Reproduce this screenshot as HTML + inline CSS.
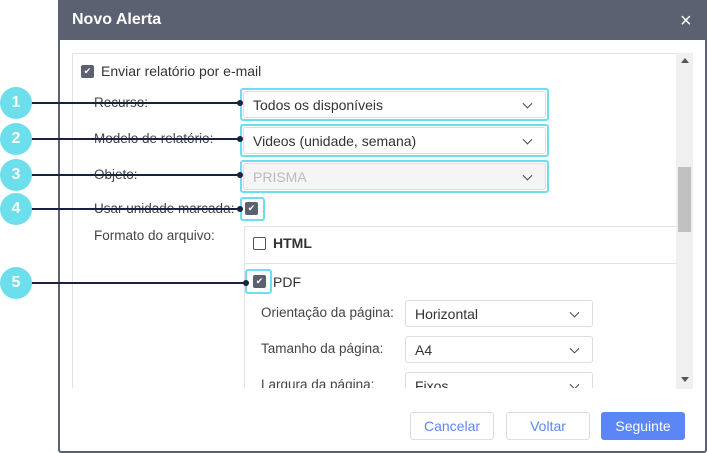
<!DOCTYPE html><html><head><style>
*{box-sizing:border-box;margin:0;padding:0}
body{width:707px;height:453px;background:#fff;font-family:"Liberation Sans",Arial,sans-serif;position:relative;overflow:hidden;color:#333;font-size:14px}
.a{position:absolute}
.dlg{left:58px;top:0;width:649px;height:453px;border:2px solid #5b6170;border-radius:3px;background:#fff}
.hd{left:58px;top:0;width:649px;height:40px;background:#5b6170;color:#fff;font-size:16px;font-weight:bold;padding:11px 0 0 14px}
.lbl{color:#444;font-size:13.5px}
.sel{border:1px solid #ddd;border-radius:3px;background:#fff;font-size:14px;padding-left:9px;display:flex;align-items:center}
.hl{border:2px solid #6ddfec;border-radius:3px}
.chev{position:absolute;right:14px;top:50%;width:7px;height:7px;border-right:1.6px solid #444;border-bottom:1.6px solid #444;transform:translateY(-70%) rotate(45deg)}
.cb{width:13px;height:13px;border-radius:2px;background:#5b6170;color:#fff;font-size:9px;line-height:13px;text-align:center}
.circ{width:32px;height:32px;border-radius:50%;background:#6ddfec;color:#fff;font-weight:bold;font-size:16px;text-align:center;line-height:32px}
.ln{height:2px;background:#172340}
.dot{width:6px;height:6px;border-radius:50%;background:#172340}
.btn{height:28px;border:1px solid #ddd;border-radius:3px;color:#5b86f5;font-size:14px;text-align:center;line-height:26px;background:#fff}
</style></head><body>
<div class="a dlg"></div>
<div class="a hd">Novo Alerta</div>
<div class="a" style="left:680px;top:10px;color:#fff;font-size:20px">×</div>
<div class="a" style="left:72px;top:53px;width:605px;height:336px;border:1px solid #e3e3e3;border-bottom:none"></div>
<div class="a" style="left:676px;top:53px;width:17px;height:336px;background:#f0f0f0"></div>
<div class="a" style="left:678px;top:167px;width:13px;height:65px;background:#c1c1c1"></div>
<div class="a" style="left:681px;top:58px;border:4px solid transparent;border-bottom:5px solid #555;border-top:none"></div>
<div class="a" style="left:681px;top:377px;border:4px solid transparent;border-top:5px solid #555;border-bottom:none"></div>
<div class="a cb" style="left:81px;top:65px">✔</div>
<div class="a" style="left:101px;top:63px;font-size:14px;color:#333">Enviar relatório por e-mail</div>
<div class="a lbl" style="left:94px;top:95px">Recurso:</div>
<div class="a lbl" style="left:94px;top:131px">Modelo de relatório:</div>
<div class="a lbl" style="left:94px;top:167px">Objeto:</div>
<div class="a lbl" style="left:94px;top:201px">Usar unidade marcada:</div>
<div class="a lbl" style="left:94px;top:228px">Formato do arquivo:</div>
<div class="a hl" style="left:240px;top:88px;width:309px;height:33px"></div>
<div class="a sel" style="left:243px;top:91px;width:303px;height:27px">Todos os disponíveis<span class="chev"></span></div>
<div class="a hl" style="left:240px;top:124px;width:309px;height:33px"></div>
<div class="a sel" style="left:243px;top:127px;width:303px;height:27px">Videos (unidade, semana)<span class="chev"></span></div>
<div class="a hl" style="left:240px;top:160px;width:309px;height:33px"></div>
<div class="a sel" style="left:243px;top:163px;width:303px;height:27px;background:#f5f5f5;color:#bbb">PRISMA<span class="chev"></span></div>
<div class="a hl" style="left:240px;top:197px;width:25px;height:24px"></div>
<div class="a cb" style="left:245px;top:202px">✔</div>
<div class="a" style="left:244px;top:226px;width:433px;height:163px;border-left:1px solid #e3e3e3;border-top:1px solid #e3e3e3"></div>
<div class="a" style="left:244px;top:263px;width:433px;height:1px;background:#e3e3e3"></div>
<div class="a" style="left:253px;top:237px;width:13px;height:13px;border:1.5px solid #555;border-radius:2px"></div>
<div class="a" style="left:273px;top:235px;font-weight:bold;color:#333">HTML</div>
<div class="a hl" style="left:245px;top:269px;width:27px;height:25px"></div>
<div class="a cb" style="left:253px;top:275px">✔</div>
<div class="a" style="left:273px;top:274px;color:#333">PDF</div>
<div class="a lbl" style="left:261px;top:305px">Orientação da página:</div>
<div class="a lbl" style="left:261px;top:341px">Tamanho da página:</div>
<div class="a lbl" style="left:261px;top:377px">Largura da página:</div>
<div class="a sel" style="left:405px;top:300px;width:188px;height:27px">Horizontal<span class="chev"></span></div>
<div class="a sel" style="left:405px;top:336px;width:188px;height:27px">A4<span class="chev"></span></div>
<div class="a sel" style="left:405px;top:372px;width:188px;height:27px">Fixos<span class="chev"></span></div>
<div class="a" style="left:60px;top:388px;width:616px;height:20px;background:#fff"></div>
<div class="a" style="left:676px;top:388px;width:17px;height:1px;background:#f0f0f0"></div>
<div class="a btn" style="left:410px;top:412px;width:84px">Cancelar</div>
<div class="a btn" style="left:506px;top:412px;width:84px">Voltar</div>
<div class="a btn" style="left:601px;top:412px;width:84px;background:#5b86f5;border-color:#5b86f5;color:#fff">Seguinte</div>
<div class="a ln" style="left:30px;top:102px;width:210px"></div><div class="a dot" style="left:237px;top:100px"></div>
<div class="a ln" style="left:30px;top:138px;width:210px"></div><div class="a dot" style="left:237px;top:136px"></div>
<div class="a ln" style="left:30px;top:174px;width:210px"></div><div class="a dot" style="left:237px;top:172px"></div>
<div class="a ln" style="left:30px;top:208px;width:210px"></div><div class="a dot" style="left:237px;top:206px"></div>
<div class="a ln" style="left:30px;top:282px;width:216px"></div><div class="a dot" style="left:243px;top:280px"></div>
<div class="a circ" style="left:0;top:87px">1</div>
<div class="a circ" style="left:0;top:123px">2</div>
<div class="a circ" style="left:0;top:159px">3</div>
<div class="a circ" style="left:0;top:193px">4</div>
<div class="a circ" style="left:0;top:267px">5</div>
</body></html>
